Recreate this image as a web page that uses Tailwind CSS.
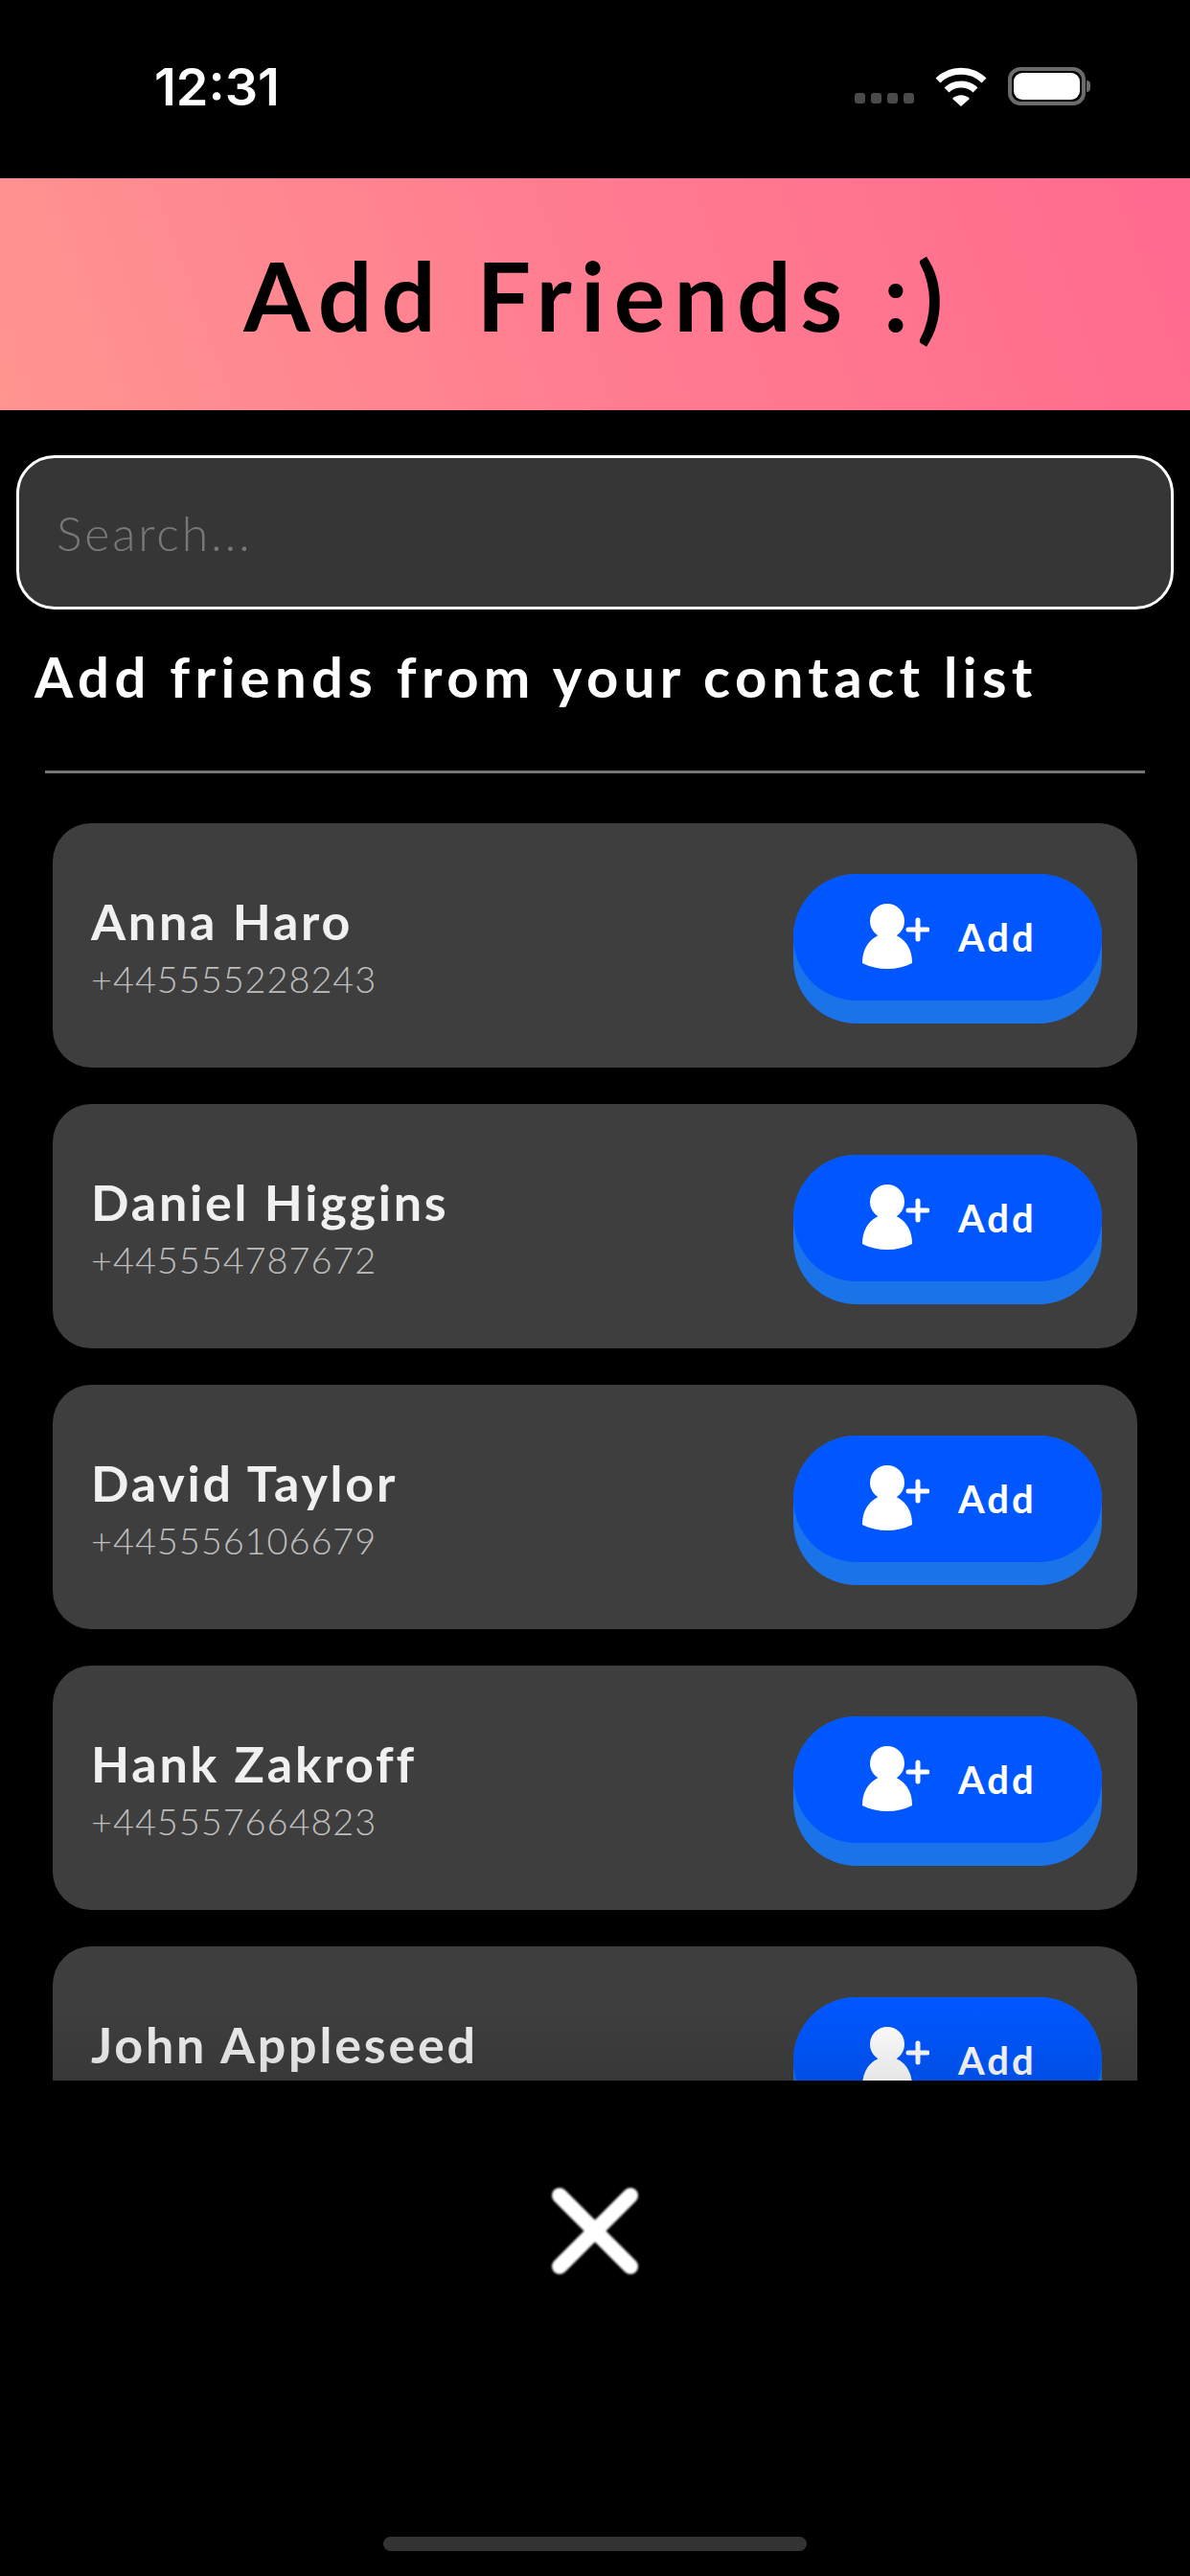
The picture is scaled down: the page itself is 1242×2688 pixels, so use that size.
<!DOCTYPE html>
<html lang="en">

<head>
    <meta charset="UTF-8" />
    <script src="https://cdn.jsdelivr.net/npm/@tailwindcss/browser@4"></script>
    <title>Add Friends</title>
</head>

<body class="bg-black text-white font-['Lato',sans-serif]">
    <div class="w-[1242px] h-[2688px] flex flex-col overflow-hidden">
        <!-- Status bar -->
        <div class="h-[186px] shrink-0 flex justify-between pl-[161px] pr-[104px] pt-[60px]">
            <span class="font-['Inter',sans-serif] text-[54px] leading-[62px] font-semibold tracking-[0px]">12:31</span>
            <div class="flex items-start pt-[10px]">
                <div class="flex gap-[6px] mt-[27px] mr-[22px]">
                    <span class="w-[11px] h-[11px] rounded-[3px] bg-[#4a4a4a]"></span>
                    <span class="w-[11px] h-[11px] rounded-[3px] bg-[#4a4a4a]"></span>
                    <span class="w-[11px] h-[11px] rounded-[3px] bg-[#4a4a4a]"></span>
                    <span class="w-[11px] h-[11px] rounded-[3px] bg-[#4a4a4a]"></span>
                </div>
                <svg class="w-[54px] h-[42px] mr-[22px]" viewBox="0 0 54 42" fill="none" stroke="white" stroke-width="7">
                    <path d="M3 14 C16 1 38 1 51 14" />
                    <path d="M12 24 C20 16 34 16 42 24" />
                    <path d="M27 41 L18 33 C23 28 31 28 36 33 Z" fill="white" stroke="none" />
                </svg>
                <div class="w-[81px] h-[40px] rounded-[13px] border-[4px] border-[#6b6b6b] p-[2px] bg-black">
                    <div class="w-full h-full rounded-[9px] bg-white"></div>
                </div>
                <span class="w-[4px] h-[12px] mt-[14px] ml-[1px] rounded-r-full bg-[#6b6b6b]"></span>
            </div>
        </div>

        <!-- Header -->
        <div class="h-[242px] shrink-0 flex items-center justify-center pl-[6px] bg-[linear-gradient(70deg,#ff9490_0%,#ff7c90_50%,#ff6a8e_100%)]">
            <h1 class="text-black text-[100px] font-bold tracking-[9.3px] leading-none">Add Friends :)</h1>
        </div>

        <!-- Search -->
        <div class="mt-[47px] mx-[17px] shrink-0">
            <input
                type="text"
                placeholder="Search..."
                class="w-[1208px] h-[161px] rounded-[40px] border-[3px] border-white bg-[#363636] px-[39px] text-[50px] font-light tracking-[2.8px] placeholder:text-[#787878]"
            />
        </div>

        <h2 class="mt-[35px] ml-[36px] text-[58px] leading-[70px] font-bold tracking-[5.4px] shrink-0">Add friends from your contact list</h2>

        <div class="mt-[63px] mx-[47px] h-[3px] bg-[#777777] shrink-0"></div>

        <!-- Contact list -->
        <div class="relative mt-[52px] h-[1312px] shrink-0">
            <div id="contacts" class="px-[55px] h-full overflow-hidden flex flex-col gap-[38px]"></div>
            <div class="absolute inset-x-0 bottom-0 h-[80px] bg-gradient-to-t from-black/10 to-transparent"></div>
        </div>

        <!-- Close -->
        <div class="mt-[111px] flex justify-center shrink-0">
            <svg class="w-[92px] h-[92px] blur-[1px]" viewBox="0 0 92 92" fill="none" stroke="white" stroke-width="16" stroke-linecap="round">
                <path d="M9 9 L83 83" />
                <path d="M83 9 L9 83" />
            </svg>
        </div>

        <!-- Home indicator -->
        <div class="mt-[273px] mx-auto w-[442px] h-[15px] rounded-full bg-[#333333] shrink-0"></div>
    </div>

    <script>
        // last row is cut off by the list before its number shows
        const contacts = [
            { name: "Anna Haro", phone: "+445555228243" },
            { name: "Daniel Higgins", phone: "+445554787672" },
            { name: "David Taylor", phone: "+445556106679" },
            { name: "Hank Zakroff", phone: "+445557664823" },
            { name: "John Appleseed", phone: "" },
        ];

        const container = document.getElementById("contacts");

        contacts.forEach((contact) => {
            const card = document.createElement("div");
            card.className = "h-[255px] shrink-0 rounded-[40px] bg-[#3e3e3e] flex items-start justify-between pl-[40px] pr-[37px] pt-[53px]";

            card.innerHTML = `
        <div class="pt-[18px]">
          <p class="text-[52px] leading-[62px] font-bold tracking-[2.8px] text-[#f0f0f0]">${contact.name}</p>
          <p class="mt-[6px] text-[38px] leading-[46px] font-light tracking-[0.9px] text-[#bdbdbd]">${contact.phone}</p>
        </div>
        <div class="w-[322px] h-[156px] shrink-0 rounded-[66px] bg-[#1a73e8]">
          <div class="h-[132px] rounded-[66px] bg-[#0057ff] flex items-center pl-[72px]">
            <svg class="w-[70px] h-[70px]" viewBox="0 0 70 70" fill="white">
              <circle cx="26" cy="18" r="18" />
              <path d="M0 62 C0 44 10 33 26 30 C42 33 52 44 52 62 C36 70 16 70 0 62 Z" />
              <path d="M48 27 H68 M58 17 V37" stroke="white" stroke-width="5" stroke-linecap="round" fill="none" />
            </svg>
            <span class="ml-[30px] text-[40px] leading-[36px] font-bold tracking-[3px]">Add</span>
          </div>
        </div>
      `;

            container.appendChild(card);
        });
    </script>
</body>

</html>
